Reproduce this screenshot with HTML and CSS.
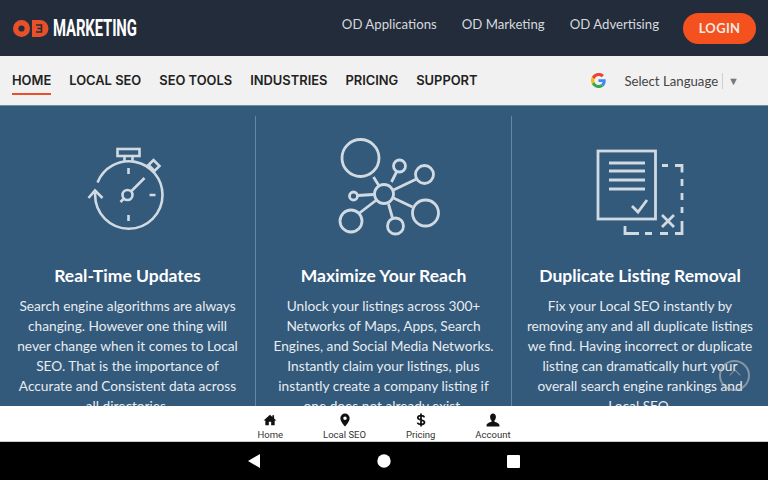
FILE: index.html
```html
<!DOCTYPE html>
<html lang="en">
<head>
<meta charset="utf-8">
<title>OD Marketing</title>
<link rel="stylesheet" href="styles.css">
</head>
<body>
<div class="screen">
  <header class="topbar">
    <div class="logo">
      <svg class="logo-mark" viewBox="0 0 36 17" width="36" height="17" aria-hidden="true">
        <circle cx="8.500" cy="8.500" r="5.800" fill="none" stroke="#e8502a" stroke-width="5.400"/>
        <path d="M19 0h8a8.500 8.500 0 0 1 0 17h-8z" fill="#e8502a"/>
        <path d="M23 5h5.500v7H23M24.500 8.500h4" fill="none" stroke="#232c3b" stroke-width="1.600"/>
      </svg>
      <span class="logo-text">MARKETING</span>
    </div>
    <nav class="toplinks">
      <a>OD Applications</a>
      <a>OD Marketing</a>
      <a>OD Advertising</a>
    </nav>
    <button class="login">LOGIN</button>
  </header>

  <nav class="mainnav">
    <a class="active">HOME</a>
    <a>LOCAL SEO</a>
    <a>SEO TOOLS</a>
    <a>INDUSTRIES</a>
    <a>PRICING</a>
    <a>SUPPORT</a>
    <div class="translate">
      <svg class="g-icon" viewBox="0 0 48 48" width="15" height="15" aria-hidden="true">
        <path fill="#ea4335" d="M24 9.500c3.900 0 7.300 1.400 10 3.900l7.400-7.400C36.900 1.900 31 0 24 0 14.600 0 6.500 5.400 2.600 13.200l8.600 6.700C13.200 13.800 18.100 9.500 24 9.500z"/>
        <path fill="#4285f4" d="M47 24.500c0-1.700-.2-3.300-.5-4.500H24v9h13c-.6 3-2.300 5.500-4.900 7.200l7.900 6.100C44.500 38.100 47 31.900 47 24.500z"/>
        <path fill="#fbbc05" d="M11.200 28.600c-.5-1.500-.8-3-.8-4.600s.3-3.100.8-4.600l-8.600-6.700C.9 16 0 19.900 0 24s.9 8 2.600 11.300z"/>
        <path fill="#34a853" d="M24 48c6.500 0 11.900-2.100 15.900-5.800L32 36.100c-2.200 1.500-4.900 2.400-8 2.400-5.900 0-10.900-4.300-12.800-9.900l-8.600 6.700C6.500 42.600 14.600 48 24 48z"/>
      </svg>
      <span class="lang">Select Language</span>
      <span class="caret">▼</span>
    </div>
  </nav>

  <main class="features">
    <section class="feature">
      <svg class="icon" viewBox="71.500 134 112 110" width="112" height="110" aria-hidden="true">
        <g fill="none" stroke="#d0dae2" stroke-width="2.600">
          <path d="M97 182.500A33.700 33.700 0 0 1 162 195A33.700 33.700 0 0 1 94.600 195V191"/>
          <path d="M88 198 94.500 190.500 102 198"/>
          <rect x="117" y="149" width="22" height="7"/>
          <path d="M124 156v5M132 156v5"/>
          <path d="m148 165 5-5 6 6-5 5z"/>
          <circle cx="127" cy="195" r="5"/>
          <path d="m131 191 13-13M123 199l-3 3"/>
          <path d="M128 168v6M128 215v6M149 195h6"/>
        </g>
      </svg>
      <h2>Real-Time Updates</h2>
      <p>Search engine algorithms are always<br>changing. However one thing will<br>never change when it comes to Local<br>SEO. That is the importance of<br>Accurate and Consistent data across<br>all directories.</p>
    </section>
    <section class="feature">
      <svg class="icon" viewBox="327.500 134 112 110" width="112" height="110" aria-hidden="true">
        <g fill="none" stroke="#d0dae2" stroke-width="2.800">
          <circle cx="360" cy="158" r="18.500"/>
          <circle cx="399" cy="166" r="6"/>
          <circle cx="424" cy="174.500" r="9"/>
          <circle cx="353" cy="196" r="4"/>
          <circle cx="383.500" cy="194" r="9.500"/>
          <circle cx="350.500" cy="221" r="11"/>
          <circle cx="395" cy="226" r="8"/>
          <circle cx="425" cy="213" r="13"/>
          <path d="m373 177 5 8M396 172l-5 10M416 179l-23 11M357 195.500l16-1M359 213l17-13M388 204l4 14M393 198l19 9"/>
        </g>
      </svg>
      <h2>Maximize Your Reach</h2>
      <p>Unlock your listings across 300+<br>Networks of Maps, Apps, Search<br>Engines, and Social Media Networks.<br>Instantly claim your listings, plus<br>instantly create a company listing if<br>one does not already exist.</p>
    </section>
    <section class="feature">
      <svg class="icon" viewBox="584 134 112 110" width="112" height="110" aria-hidden="true">
        <g fill="none" stroke="#d0dae2" stroke-width="2.800">
          <rect x="598" y="151" width="57.500" height="68"/>
          <path d="M609 163h36M609 171h36M609 180h36M609 189h36"/>
          <path d="m632 206 6 6 9-12"/>
          <path d="M662 165.500h6M675 165.500h7v7M682 179v7M682 193v7M682 207v6M682 221v12.500h-7M668 233.500h-8M652 233.500h-7M639 233.500h-7M625 226v7.500h8"/>
          <path d="m662 215 12 12M674 215l-12 12"/>
        </g>
      </svg>
      <h2>Duplicate Listing Removal</h2>
      <p>Fix your Local SEO instantly by<br>removing any and all duplicate listings<br>we find. Having incorrect or duplicate<br>listing can dramatically hurt your<br>overall search engine rankings and<br>Local SEO.</p>
    </section>
    <div class="to-top" aria-hidden="true"></div>
  </main>

  <nav class="tabbar">
    <a class="tab">
      <svg viewBox="0 0 24 24" width="14" height="14" aria-hidden="true"><path fill="#111" d="M12 3 1 13h3v8h6v-6h4v6h6v-8h3l-4-3.600V4h-3v2.700z"/></svg>
      <span>Home</span>
    </a>
    <a class="tab">
      <svg viewBox="0 0 24 24" width="14" height="14" aria-hidden="true"><path fill="#111" fill-rule="evenodd" d="M12 1a8 8 0 0 0-8 8c0 6 8 14 8 14s8-8 8-14a8 8 0 0 0-8-8zm0 5a3 3 0 1 1 0 6 3 3 0 0 1 0-6z"/></svg>
      <span>Local SEO</span>
    </a>
    <a class="tab">
      <svg viewBox="0 0 24 24" width="14" height="14" aria-hidden="true"><path fill="none" stroke="#111" stroke-width="3" d="M17.500 7.500C17 5.500 15 4.500 12 4.500S6.500 6 6.500 8.300c0 5 11.500 2.500 11.500 7.400 0 2.300-2.500 3.800-6 3.800s-5.500-1-6-3M12 1v22"/></svg>
      <span>Pricing</span>
    </a>
    <a class="tab">
      <svg viewBox="0 0 24 24" width="14" height="14" aria-hidden="true"><path fill="#111" d="M12 1c3 0 5 2.300 5 5.500S15.500 12 14.500 13v2c3 1 8.500 2.500 8.500 6v2H1v-2c0-3.500 5.500-5 8.500-6v-2C8.500 12 7 9.700 7 6.500S9 1 12 1z"/></svg>
      <span>Account</span>
    </a>
  </nav>

  <footer class="androidbar">
    <svg viewBox="0 0 12 14" width="12" height="14" aria-hidden="true"><path fill="#fff" d="M12 0v14L0 7z"/></svg>
    <svg viewBox="0 0 14 14" width="14" height="14" aria-hidden="true"><circle cx="7" cy="7" r="6.700" fill="#fff"/></svg>
    <svg class="android-square" viewBox="0 0 13 13" width="13" height="13" aria-hidden="true"><rect width="13" height="13" rx="1" fill="#fff"/></svg>
  </footer>
</div>
</body>
</html>
```

FILE: styles.css
```css
* { box-sizing: border-box; }
html, body { margin: 0; padding: 0; }
body { width: 768px; height: 480px; overflow: hidden; font-family: "Lato", "Open Sans", sans-serif; }
.screen { width: 768px; height: 480px; display: flex; flex-direction: column; overflow: hidden; }

.topbar { height: 56px; flex: none; background: #232c3b; display: flex; align-items: center; padding: 0 12px 0 13px; }
.logo { display: flex; align-items: center; gap: 4px; }
.logo-mark { display: block; }
.logo-text { color: #fff; font-family: "Roboto", sans-serif; font-weight: 700; font-size: 24px; line-height: 24px; letter-spacing: -.2px; transform: scaleX(.62); transform-origin: left center; width: 84px; }
.toplinks { margin-left: auto; display: flex; gap: 25px; margin-right: 24px; margin-top: -8px; }
.toplinks a { color: #d6d9dd; font-size: 13.200px; }
.login { width: 73px; height: 31px; border: 0; border-radius: 16px; background: #f4511e; color: #f3e9e2; font-family: "Lato", sans-serif; font-weight: 700; font-size: 13px; letter-spacing: .3px; }

.mainnav { height: 49px; flex: none; background: #f1f1f1; display: flex; align-items: center; padding: 0 29px 0 12px; gap: 18px; }
.mainnav > a { color: #222; font-family: "Inter", sans-serif; font-weight: 600; font-size: 12.900px; height: 49px; padding-top: 17px; position: relative; }
.mainnav > a.active::after { content: ""; position: absolute; left: 0; right: 0; bottom: 10px; height: 2px; background: #e8502a; }
.translate { margin-left: auto; display: flex; align-items: center; }
.g-icon { display: block; margin-right: 18px; }
.lang { color: #444; font-size: 13.200px; padding-right: 4px; border-right: 1px solid #d0d0d0; line-height: 16px; }
.caret { color: #777; font-size: 11px; margin-left: 5px; }

.features { flex: 1; min-height: 0; background: #33597b; border-top: 1px solid #6f8ba3; display: grid; grid-template-columns: repeat(3, 256px); position: relative; overflow: hidden; padding-top: 10px; }
.feature { border-right: 1px solid #6488a4; padding-top: 18px; text-align: center; color: #e6ecf0; height: 320px; }
.feature:last-of-type { border-right: 0; }
.icon { display: block; margin: 0 auto; }
.feature h2 { margin: 21px 0 9px; color: #fff; font-size: 17.500px; line-height: 22px; font-weight: 700; }
.feature p { margin: 0; font-size: 13.700px; line-height: 20px; white-space: nowrap; }
.to-top { position: absolute; left: 719px; top: 254px; width: 31px; height: 31px; border-radius: 50%; border: 2px solid rgba(190,190,190,.6); }
.to-top::before { content: ""; position: absolute; left: 10px; top: 9px; width: 7px; height: 7px; border-left: 1px solid rgba(190,190,190,.6); border-top: 1px solid rgba(190,190,190,.6); transform: rotate(45deg); }

.tabbar { height: 36px; flex: none; background: #fff; display: flex; justify-content: center; gap: 40px; border-bottom: 1px solid #ccc; }
.tab { display: flex; flex-direction: column; align-items: center; padding-top: 7px; color: #333; font-family: "Roboto", sans-serif; font-size: 9.500px; line-height: 12px; }
.tab svg { display: block; margin-bottom: 2px; }

.androidbar { height: 38px; flex: none; background: #000; display: flex; align-items: center; gap: 117px; padding-left: 248px; }
.androidbar svg { display: block; }
.androidbar .android-square { margin-left: -1px; }
```
